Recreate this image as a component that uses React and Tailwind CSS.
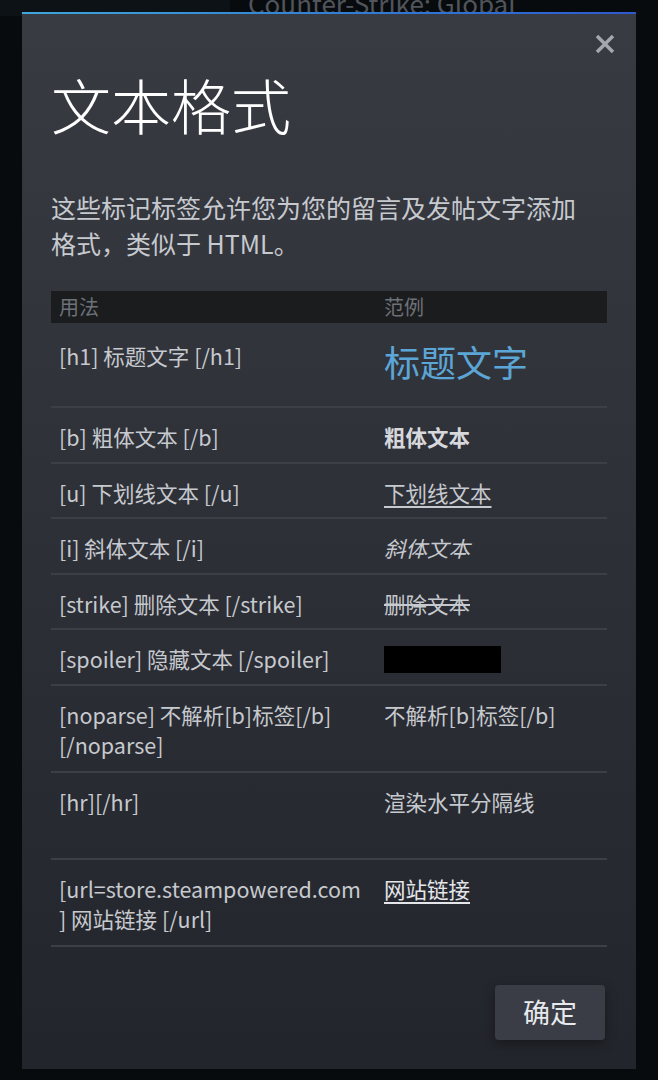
const rows = [
  { usage: '[h1] 标题文字 [/h1]', example: <span className="text-[36px] leading-[40px] text-[#5ba6d6]">标题文字</span>, h: 'h-[85px]', pt: 'pt-[18px]' },
  { usage: '[b] 粗体文本 [/b]', example: <span className="font-bold text-[#d6d8dc]">粗体文本</span> },
  { usage: '[u] 下划线文本 [/u]', example: <span className="underline underline-offset-[4px]">下划线文本</span> },
  { usage: '[i] 斜体文本 [/i]', example: <span className="italic">斜体文本</span> },
  { usage: '[strike] 删除文本 [/strike]', example: <span className="line-through">删除文本</span> },
  { usage: '[spoiler] 隐藏文本 [/spoiler]', example: <span className="block w-[117px] h-[27px] bg-black mt-[2px]" /> },
  { usage: '[noparse] 不解析[b]标签[/b] [/noparse]', example: '不解析[b]标签[/b]', h: 'h-[87px]' },
  { usage: '[hr][/hr]', example: '渲染水平分隔线', h: 'h-[87px]' },
  { usage: '[url=store.steampowered.com ] 网站链接 [/url]', example: <span className="underline underline-offset-[4px] text-[#e4e6ea]">网站链接</span>, h: 'h-[87px]' },
];

export default function App() {
  return (
    <div className="relative w-[658px] h-[1080px] bg-[#080b0e] overflow-hidden" style={{ fontFamily: '"Noto Sans CJK SC", "Noto Sans", sans-serif' }}>
      {/* page behind the dialog */}
      <div className="flex">
        <div className="w-[230px] h-[16px] bg-[#0d1217]" />
        <div className="ml-[18px] -mt-[12px] text-[26px] leading-[30px] text-[#50545b]">Counter-Strike: Global</div>
      </div>

      {/* dialog */}
      <div className="absolute left-[22px] top-[12px] w-[614px] h-[1057px] flex flex-col bg-gradient-to-b from-[#393b43] to-[#23252c]">
        <div className="h-[2px] bg-gradient-to-r from-[#3fa6da] to-[#2e58cf]" />
        <div className="flex justify-end pr-[20px] pt-[19px]">
          <svg width="22" height="22" viewBox="0 0 22 22" className="text-[#a4a7ad]">
            <path d="M3 3 L19 19 M19 3 L3 19" stroke="currentColor" strokeWidth="3.5" />
          </svg>
        </div>
        <div className="px-[29px]">
          <h1 className="mt-[14px] text-[60px] leading-[70px] font-light text-white">文本格式</h1>
          <p className="mt-[50px] w-[545px] text-[25px] leading-[36px] text-[#c6c9ce]">这些标记标签允许您为您的留言及发帖文字添加格式，类似于 HTML。</p>

          <div className="mt-[30px] text-[21.5px] leading-[30px] text-[#c6c9ce]">
            <div className="flex h-[32px] items-center bg-[#1b1c1e] text-[20px] text-[#6d7178]">
              <div className="w-[333px] pl-[8px]">用法</div>
              <div>范例</div>
            </div>
            {rows.map((r, i) => (
              <div key={i} className={`flex border-b-2 border-[#3d3f45] ${r.h || 'h-[55.5px]'} ${r.pt || 'pt-[14px]'}`}>
                <div className="w-[333px] pl-[8px] pr-[20px]">{r.usage}</div>
                <div className="flex-1">{r.example}</div>
              </div>
            ))}
          </div>
        </div>
        <div className="flex-1" />
        <div className="flex justify-end pr-[31px] pb-[29px]">
          <button className="w-[110px] h-[55px] rounded-[4px] bg-[#3a3d46] text-[27px] text-[#e8e9ec] shadow-[0_4px_12px_rgba(0,0,0,0.35)]">确定</button>
        </div>
      </div>
    </div>
  );
}
